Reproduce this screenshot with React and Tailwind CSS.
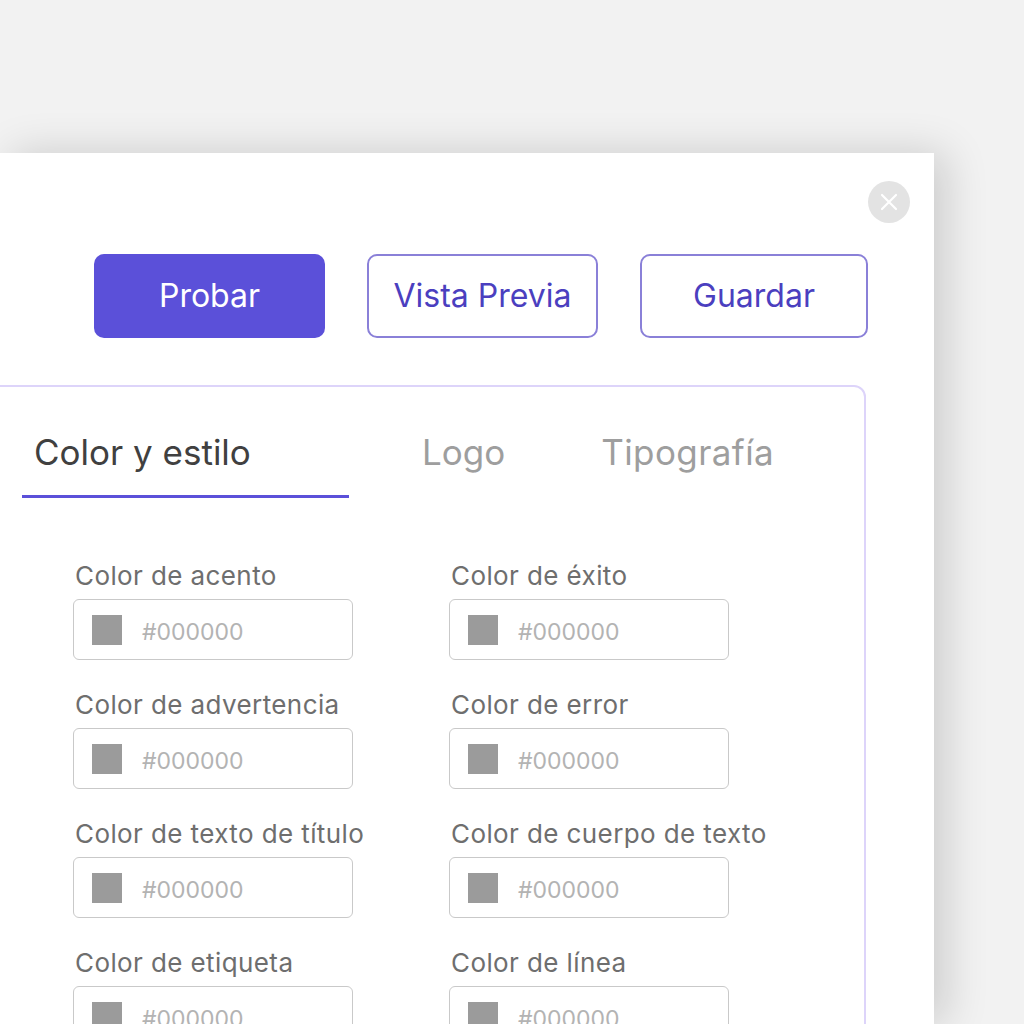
import React from 'react';

const fields = [
  ['Color de acento', 'Color de éxito'],
  ['Color de advertencia', 'Color de error'],
  ['Color de texto de título', 'Color de cuerpo de texto'],
  ['Color de etiqueta', 'Color de línea'],
];

function ColorField({ label }) {
  return (
    <div className="flex flex-col w-[280px] shrink-0">
      <label className="text-[26px] leading-[30px] tracking-[0.4px] text-[#6e6e6e] pl-[2px] whitespace-nowrap">{label}</label>
      <div className="mt-[8px] h-[61px] w-[280px] border border-[#c9c9c9] rounded-[6px] flex items-center pl-[18px]">
        <span className="w-[30px] h-[30px] bg-[#9b9b9b]"></span>
        <span className="ml-[20px] pt-[5px] text-[23px] leading-[28px] text-[#b3b3b3]">#000000</span>
      </div>
    </div>
  );
}

export default function App() {
  return (
    <div className="w-[1024px] h-[1024px] overflow-hidden bg-[#f2f2f2] pt-[153px]" style={{ fontFamily: 'Inter, "Noto Sans", sans-serif' }}>
      <div className="w-[934px] h-[871px] bg-white shadow-[12px_0_40px_rgba(0,0,0,0.16)]">
        {/* close */}
        <div className="flex justify-end pt-[28px] pr-[24px]">
          <button className="w-[42px] h-[42px] rounded-full bg-[#e3e3e3] flex items-center justify-center">
            <svg width="18" height="18" viewBox="0 0 18 18" fill="none" stroke="white" strokeWidth="2.2" strokeLinecap="round">
              <path d="M2 2L16 16M16 2L2 16" />
            </svg>
          </button>
        </div>

        {/* actions */}
        <div className="flex mt-[31px] pl-[94px] gap-[42px]">
          <button className="w-[231px] h-[84px] rounded-[10px] bg-[#5b50d9] text-white text-[32px]">Probar</button>
          <button className="w-[231px] h-[84px] rounded-[10px] border-2 border-[#8a80d8] text-[#4b3fbf] text-[32px]">Vista Previa</button>
          <button className="w-[228px] h-[84px] rounded-[10px] border-2 border-[#8a80d8] text-[#4b3fbf] text-[32px]">Guardar</button>
        </div>

        {/* card */}
        <div className="-ml-[20px] mt-[47px] w-[886px] h-[700px] border-2 border-[#ddd4fa] rounded-[12px]">
          <div className="flex pl-[40px] items-end">
            <div className="w-[327px] pt-[45px] pb-[23px] pl-[12px] border-b-[3px] border-[#5b50d9] text-[35px] leading-[40px] text-[#404040]">
              Color y estilo
            </div>
            <div className="ml-[73px] pt-[45px] pb-[26px] text-[35px] leading-[40px] text-[#9e9e9e]">Logo</div>
            <div className="ml-[96px] pt-[45px] pb-[26px] text-[35px] leading-[40px] tracking-[0.4px] text-[#9e9e9e]">Tipografía</div>
          </div>

          <div className="mt-[63px] pl-[91px] flex flex-col gap-[30px]">
            {fields.map((row, i) => (
              <div key={i} className="flex gap-[96px]">
                <ColorField label={row[0]} />
                <ColorField label={row[1]} />
              </div>
            ))}
          </div>
        </div>
      </div>
    </div>
  );
}
